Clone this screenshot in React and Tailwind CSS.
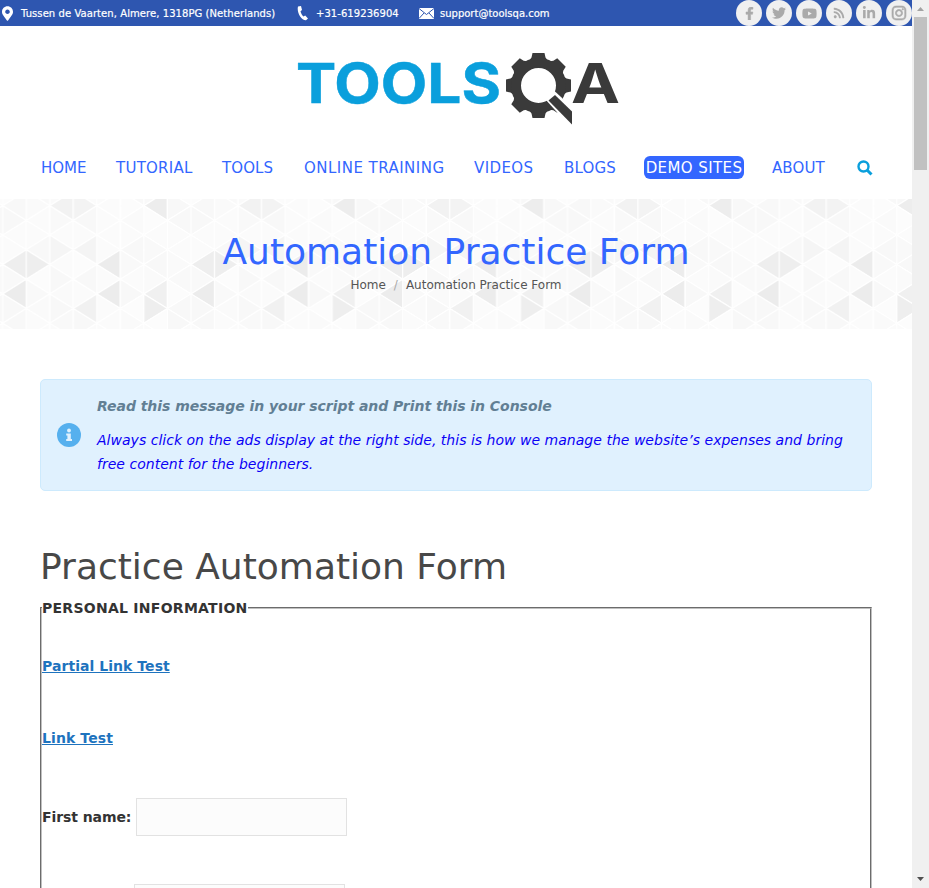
import React from "react";
import { FaFacebookF, FaTwitter, FaYoutube, FaRss, FaLinkedinIn, FaInstagram, FaMapMarkerAlt } from "react-icons/fa";

const COL = 23.53;
const ROW = 29.4;

const soft = ["#f9f9f9", "#fbfbfb", "#f8f8f8", "#fcfcfc", "#fafafa", "#fbfbfb", "#f8f8f8"];

// Shade of highlighted triangles, keyed by column, direction and row index.
const marks = {
  "0L4": "#eeeeee", "1R4": "#eeeeee", "4L4": "#ececec",
  "0L6": "#ececec", "4L6": "#ececec", "6L6": "#f0f0f0", "6R7": "#eeeeee",
  "3L7": "#f1f1f1", "2L0": "#f2f2f2", "3R0": "#f3f3f3", "6L0": "#ededed",
  "3L3": "#f4f4f4", "2R3": "#f5f5f5",
};

function buildTriangles() {
  const out = [];
  for (let c = 0; c < 8; c++) {
    for (let k = -2; k < 10; k++) {
      const y = 6.7 + (k * ROW) / 2;
      const left = (k + c) % 2 === 0;
      const x1 = c * COL;
      const x2 = x1 + COL;
      const d = left
        ? `${x1},${y} ${x2},${y - ROW / 2} ${x2},${y + ROW / 2}`
        : `${x2},${y} ${x1},${y - ROW / 2} ${x1},${y + ROW / 2}`;
      out.push({ d, c, k, left });
    }
  }
  return out;
}

function Triangles() {
  return (
    <svg className="absolute inset-0" width="912" height="130">
      <defs>
        <pattern id="tri" x="2.7" y="0" width={COL * 8} height="130" patternUnits="userSpaceOnUse">
          {buildTriangles().map(({ d, c, k, left }) => (
            <polygon
              key={`${c}-${k}-${left}`}
              points={d}
              fill={marks[`${c}${left ? "L" : "R"}${k}`] || soft[(c * 5 + (k + 2) * 3 + c * k + 14) % 7]}
              stroke="#fff"
              strokeWidth="1.2"
            />
          ))}
        </pattern>
      </defs>
      <rect width="912" height="130" fill="url(#tri)" />
    </svg>
  );
}

function Gear() {
  return (
    <g>
      {[0, 45, 90, 135, 180, 225, 270, 315].map((a) => (
        <path key={a} d="M-10 -24 L-7 -28 L-6 -32.500 H6 L7 -28 L10 -24Z" fill="#3a3a3a" transform={`translate(248.5 40.5) rotate(${a})`} />
      ))}
      <circle cx="248.500" cy="40.500" r="22.500" fill="none" stroke="#3a3a3a" strokeWidth="10" />
      <path d="M255 54 L264.500 46 L284 64 V86Z" fill="#fff" />
      <path d="M258.500 55.500 L265 50 L282 66.500 V79.500Z" fill="#3a3a3a" />
    </g>
  );
}

function Logo() {
  return (
    <svg width="340" height="90" viewBox="0 0 340 90" className="shrink-0" aria-label="TOOLSQA">
      <text x="6" y="57.500" fill="#0a9fdc" stroke="#0a9fdc" strokeWidth="0.500" fontSize="55" fontWeight="700" textLength="205" lengthAdjust="spacingAndGlyphs" className="font-[Inter,sans-serif]">TOOLS</text>
      <Gear />
      <text x="281" y="57.500" fill="#3a3a3a" fontSize="55" fontWeight="700" textLength="49" lengthAdjust="spacingAndGlyphs" className="font-[Inter,sans-serif]">A</text>
    </svg>
  );
}

const socials = [FaFacebookF, FaTwitter, FaYoutube, FaRss, FaLinkedinIn, FaInstagram];

function TopBar() {
  return (
    <div className="flex h-[26px] shrink-0 items-center bg-[#2e56b0] text-[10px] whitespace-nowrap text-white [-webkit-text-stroke:0.2px_white]">
      <FaMapMarkerAlt className="ml-[2px] h-[15px] w-[11px]" />
      <span className="ml-2 w-[276px] tracking-[0.07px]">Tussen de Vaarten, Almere, 1318PG (Netherlands)</span>
      <svg width="12" height="16" viewBox="0 0 12 16" fill="#fff">
        <path d="M1 1.500 4 1 5 5 3.500 6.200C4 8.500 5 10 6.500 11.500L8.200 10.500 11 13.500 9 15.300C4 15.500 -.5 7 1 1.500Z" />
      </svg>
      <span className="ml-[7px] w-[103px] tracking-[0.06px]">+31-619236904</span>
      <svg width="15" height="11" viewBox="0 0 15 11">
        <rect width="15" height="11" fill="#fff" />
        <path d="M0 .5 7.500 6.500 15 .5M0 10.500 5 5M15 10.500 10 5" fill="none" stroke="#2e56b0" strokeWidth="1" />
      </svg>
      <span className="ml-[6px]">support@toolsqa.com</span>
      <div className="ml-auto flex gap-1">
        {socials.map((Icon, i) => (
          <span key={i} className="flex size-[26px] items-center justify-center rounded-full bg-[#f0f0f0] text-[#aaa]">
            <Icon size={[13, 14, 15, 12, 14, 16][i]} strokeWidth={i === 5 || i === 0 ? 20 : 0} />
          </span>
        ))}
      </div>
    </div>
  );
}

const nav = [
  ["HOME", "w-[75px]"],
  ["TUTORIAL", "w-[106px] tracking-[0.25px]"],
  ["TOOLS", "w-[82px] tracking-[0.1px]"],
  ["ONLINE TRAINING", "w-[170px] tracking-[0.47px]"],
  ["VIDEOS", "w-[90px] tracking-[0.4px]"],
  ["BLOGS", "w-[80px] tracking-[0.2px]"],
];

function Nav() {
  return (
    <nav className="flex h-[23px] items-center pl-[41px] text-[15px] leading-[21px] whitespace-nowrap text-[#3366ff]">
      {nav.map(([label, width]) => (
        <span key={label} className={`${width} pt-[2px]`}>{label}</span>
      ))}
      <span className="flex h-[23px] w-[100px] items-center justify-center rounded-md bg-[#3366ff] pt-[2px] tracking-[0.4px] text-white">DEMO SITES</span>
      <span className="ml-[28px] w-[85px] pt-[2px] tracking-[0.1px]">ABOUT</span>
      <svg width="16" height="16" viewBox="0 0 16 16" fill="none" stroke="#0a9fdc" strokeWidth="2.400">
        <circle cx="6.500" cy="6.500" r="5" />
        <path d="M10 10 14.500 14.500" strokeWidth="3" />
      </svg>
    </nav>
  );
}

function Scrollbar() {
  return (
    <div className="flex h-full w-[17px] shrink-0 flex-col items-center bg-[#f0f0f0]">
      <svg width="17" height="17"><path d="M5 11h7L8.500 7Z" fill="#a3a3a3" /></svg>
      <div className="h-[153px] w-[13px] bg-[#c1c1c1]" />
      <svg className="mt-auto" width="17" height="17"><path d="M5 6h7L8.500 10Z" fill="#505050" /></svg>
    </div>
  );
}

export default function App() {
  return (
    <div className="flex h-[888px] w-[929px] overflow-hidden bg-white font-['DejaVu_Sans',sans-serif] text-[14px] text-[#333]">
      <main className="flex h-full w-[912px] flex-col overflow-hidden">
        <TopBar />
        <div className="mt-[19px] flex h-[90px] shrink-0 pl-[290px]"><Logo /></div>
        <div className="mt-[21px] shrink-0"><Nav /></div>
        <header className="relative mt-5 h-[130px] shrink-0 bg-[#fafafa]">
          <Triangles />
          <div className="relative flex flex-col items-center pt-[31px]">
            <h1 className="text-[36px] leading-[44px] whitespace-nowrap text-[#3366ff]">Automation Practice Form</h1>
            <div className="flex text-[12px] leading-[22px] text-[#555]">
              <span>Home</span><span className="w-5 text-center text-[#aaa]">/</span><span>Automation Practice Form</span>
            </div>
          </div>
        </header>
        <section className="mx-10 mt-[50px] flex h-[112px] shrink-0 items-center rounded-[5px] border border-[#cdeafd] bg-[#e0f1fe] pl-4">
          <svg width="24" height="24" viewBox="0 0 24 24">
            <circle cx="12" cy="12" r="12" fill="#56b0ee" />
            <circle cx="12" cy="7.500" r="1.900" fill="#e0f1fe" />
            <path d="M9.200 10.500h4.600v5.500h1.200v2H9.200v-2h1.200v-3.500H9.200z" fill="#e0f1fe" />
          </svg>
          <div className="ml-4 text-[14px] leading-6 whitespace-nowrap italic">
            <p className="mb-[10px] font-bold tracking-[-0.04px] text-[#627f94]">Read this message in your script and Print this in Console</p>
            <p className="tracking-[0.02px] text-[#0b00f5]">Always click on the ads display at the right side, this is how we manage the website’s expenses and bring<br />free content for the beginners.</p>
          </div>
        </section>
        <h2 className="mt-[54px] ml-10 shrink-0 text-[36px] leading-[44px] whitespace-nowrap text-[#484848]">Practice Automation Form</h2>
        <fieldset className="mx-10 mt-[7px] h-[400px] shrink-0 border-2 border-[#c0c0c0] font-bold [border-style:groove]">
          <legend className="leading-6 tracking-[0.27px]">PERSONAL INFORMATION</legend>
          <div className="mt-[34px] leading-6 tracking-[0.05px] text-[#1e73be] underline">Partial Link Test</div>
          <div className="mt-12 leading-6 tracking-[0.1px] text-[#1e73be] underline">Link Test</div>
          <div className="mt-12 flex h-[38px] items-center gap-1">
            <label className="w-[90px] tracking-[-0.08px] whitespace-nowrap">First name:</label><input className="h-[38px] w-[211px] border border-[#e2e2e2] bg-[#fcfcfc]" />
          </div>
          <div className="mt-12 flex h-[38px] items-center pl-[92px]">
            <input className="h-[38px] w-[211px] border border-[#e2e2e2] bg-[#fcfcfc]" />
          </div>
        </fieldset>
      </main>
      <Scrollbar />
    </div>
  );
}
